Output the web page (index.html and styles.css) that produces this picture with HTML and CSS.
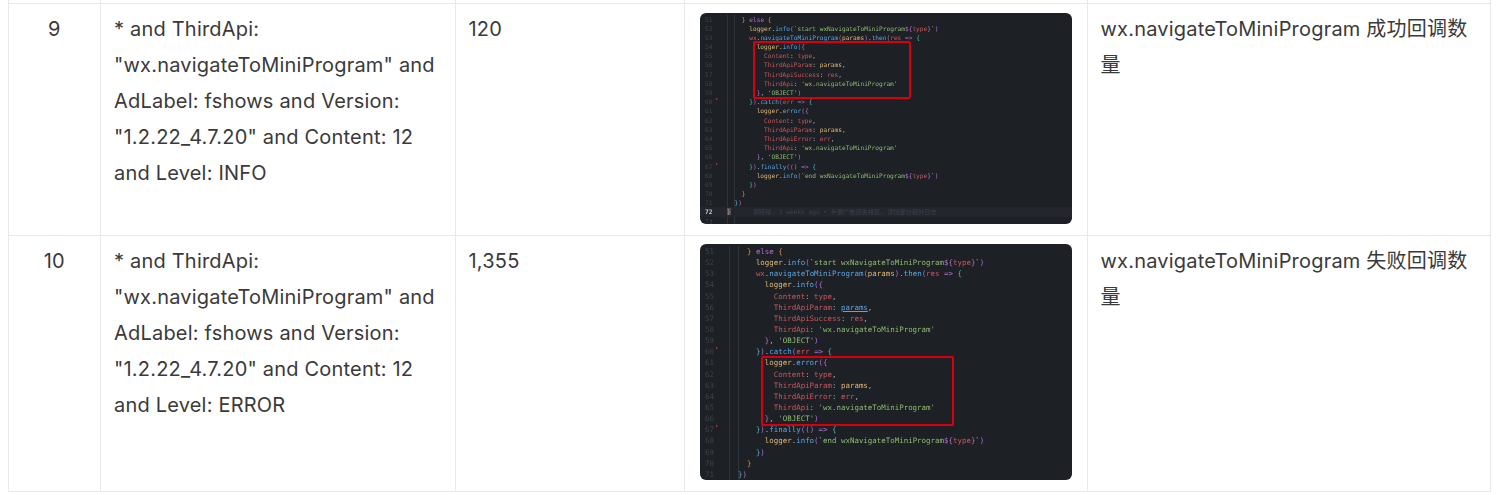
FILE: index.html
```html
<!DOCTYPE html>
<html lang="zh">
<head>
<meta charset="utf-8">
<title>Log query table</title>
<link rel="stylesheet" href="styles.css">
</head>
<body>
<table class="log-table">
<colgroup><col class="c-no"><col class="c-query"><col class="c-count"><col class="c-shot"><col class="c-desc"></colgroup>
<tbody>
<tr class="clip-row"><td></td><td></td><td></td><td></td><td></td></tr>
<tr class="row-a">
<td class="no">9</td>
<td>* and ThirdApi: "wx.navigateToMiniProgram" and AdLabel: fshows and Version: "1.2.22_4.7.20" and Content: 12 and Level: INFO</td>
<td>120</td>
<td class="shot-cell">
<div class="shot shot-a">
<div class="code">
<div class="ln"><span class="n">51</span><code>    <i class="o">}</i> <i class="p">else</i> <i class="o">{</i></code></div>
<div class="ln"><span class="n">52</span><code>      <i class="y">logger</i>.<i class="b">info</i><i class="p">(</i><i class="g">`start wxNavigateToMiniProgram</i><i class="p">${</i><i class="k">type</i><i class="p">}</i><i class="g">`</i><i class="p">)</i></code></div>
<div class="ln"><span class="n">53</span><code>      <i class="k">wx</i>.<i class="b">navigateToMiniProgram</i><i class="p">(</i><i class="y">params</i><i class="p">)</i>.<i class="b">then</i><i class="p">(</i><i class="k">res</i> <i class="p">=&gt;</i> <i class="c">{</i></code></div>
<div class="ln"><span class="n">54</span><code>        <i class="y">logger</i>.<i class="b">info</i><i class="p">({</i></code></div>
<div class="ln"><span class="n">55</span><code>          <i class="k">Content</i>: <i class="k">type</i>,</code></div>
<div class="ln"><span class="n">56</span><code>          <i class="k">ThirdApiParam</i>: <i class="y">params</i>,</code></div>
<div class="ln"><span class="n">57</span><code>          <i class="k">ThirdApiSuccess</i>: <i class="k">res</i>,</code></div>
<div class="ln"><span class="n">58</span><code>          <i class="k">ThirdApi</i>: <i class="g">'wx.navigateToMiniProgram'</i></code></div>
<div class="ln"><span class="n">59</span><code>        <i class="p">}</i>, <i class="g">'OBJECT'</i><i class="p">)</i></code></div>
<div class="ln mark"><span class="n">60</span><code>      <i class="c">}</i><i class="p">)</i>.<i class="b">catch</i><i class="p">(</i><i class="k">err</i> <i class="p">=&gt;</i> <i class="c">{</i></code></div>
<div class="ln"><span class="n">61</span><code>        <i class="y">logger</i>.<i class="b">error</i><i class="p">({</i></code></div>
<div class="ln"><span class="n">62</span><code>          <i class="k">Content</i>: <i class="k">type</i>,</code></div>
<div class="ln"><span class="n">63</span><code>          <i class="k">ThirdApiParam</i>: <i class="y">params</i>,</code></div>
<div class="ln"><span class="n">64</span><code>          <i class="k">ThirdApiError</i>: <i class="k">err</i>,</code></div>
<div class="ln"><span class="n">65</span><code>          <i class="k">ThirdApi</i>: <i class="g">'wx.navigateToMiniProgram'</i></code></div>
<div class="ln"><span class="n">66</span><code>        <i class="p">}</i>, <i class="g">'OBJECT'</i><i class="p">)</i></code></div>
<div class="ln mark"><span class="n">67</span><code>      <i class="c">}</i><i class="p">)</i>.<i class="b">finally</i><i class="p">(()</i> <i class="p">=&gt;</i> <i class="c">{</i></code></div>
<div class="ln"><span class="n">68</span><code>        <i class="y">logger</i>.<i class="b">info</i><i class="p">(</i><i class="g">`end wxNavigateToMiniProgram</i><i class="p">${</i><i class="k">type</i><i class="p">}</i><i class="g">`</i><i class="p">)</i></code></div>
<div class="ln"><span class="n">69</span><code>      <i class="c">}</i><i class="p">)</i></code></div>
<div class="ln"><span class="n">70</span><code>    <i class="o">}</i></code></div>
<div class="ln"><span class="n">71</span><code>  <i class="c">}</i><i class="p">)</i></code></div>
<div class="ln current"><span class="n">72</span><code><i class="o hl">}</i>      <i class="blame">郭晓婷, 3 weeks ago • 半屏广告流失排查, 添加部分额外日志</i></code></div>
<div class="ln"><span class="n">73</span><code></code></div>
</div>
<div class="redbox"></div>
</div>
</td>
<td>wx.navigateToMiniProgram 成功回调数量</td>
</tr>
<tr class="row-b">
<td class="no">10</td>
<td>* and ThirdApi: "wx.navigateToMiniProgram" and AdLabel: fshows and Version: "1.2.22_4.7.20" and Content: 12 and Level: ERROR</td>
<td>1,355</td>
<td class="shot-cell">
<div class="shot shot-b">
<div class="code">
<div class="ln"><span class="n">51</span><code>    <i class="o">}</i> <i class="p">else</i> <i class="o">{</i></code></div>
<div class="ln"><span class="n">52</span><code>      <i class="y">logger</i>.<i class="b">info</i><i class="p">(</i><i class="g">`start wxNavigateToMiniProgram</i><i class="p">${</i><i class="k">type</i><i class="p">}</i><i class="g">`</i><i class="p">)</i></code></div>
<div class="ln"><span class="n">53</span><code>      <i class="k">wx</i>.<i class="b">navigateToMiniProgram</i><i class="p">(</i><i class="y">params</i><i class="p">)</i>.<i class="b">then</i><i class="p">(</i><i class="k">res</i> <i class="p">=&gt;</i> <i class="c">{</i></code></div>
<div class="ln"><span class="n">54</span><code>        <i class="y">logger</i>.<i class="b">info</i><i class="p">({</i></code></div>
<div class="ln"><span class="n">55</span><code>          <i class="k">Content</i>: <i class="k">type</i>,</code></div>
<div class="ln"><span class="n">56</span><code>          <i class="k">ThirdApiParam</i>: <i class="u">params</i>,</code></div>
<div class="ln"><span class="n">57</span><code>          <i class="k">ThirdApiSuccess</i>: <i class="k">res</i>,</code></div>
<div class="ln"><span class="n">58</span><code>          <i class="k">ThirdApi</i>: <i class="g">'wx.navigateToMiniProgram'</i></code></div>
<div class="ln"><span class="n">59</span><code>        <i class="p">}</i>, <i class="g">'OBJECT'</i><i class="p">)</i></code></div>
<div class="ln mark"><span class="n">60</span><code>      <i class="c">}</i><i class="p">)</i>.<i class="b">catch</i><i class="p">(</i><i class="k">err</i> <i class="p">=&gt;</i> <i class="c">{</i></code></div>
<div class="ln"><span class="n">61</span><code>        <i class="y">logger</i>.<i class="b">error</i><i class="p">({</i></code></div>
<div class="ln"><span class="n">62</span><code>          <i class="k">Content</i>: <i class="k">type</i>,</code></div>
<div class="ln"><span class="n">63</span><code>          <i class="k">ThirdApiParam</i>: <i class="y">params</i>,</code></div>
<div class="ln"><span class="n">64</span><code>          <i class="k">ThirdApiError</i>: <i class="k">err</i>,</code></div>
<div class="ln"><span class="n">65</span><code>          <i class="k">ThirdApi</i>: <i class="g">'wx.navigateToMiniProgram'</i></code></div>
<div class="ln"><span class="n">66</span><code>        <i class="p">}</i>, <i class="g">'OBJECT'</i><i class="p">)</i></code></div>
<div class="ln mark"><span class="n">67</span><code>      <i class="c">}</i><i class="p">)</i>.<i class="b">finally</i><i class="p">(()</i> <i class="p">=&gt;</i> <i class="c">{</i></code></div>
<div class="ln"><span class="n">68</span><code>        <i class="y">logger</i>.<i class="b">info</i><i class="p">(</i><i class="g">`end wxNavigateToMiniProgram</i><i class="p">${</i><i class="k">type</i><i class="p">}</i><i class="g">`</i><i class="p">)</i></code></div>
<div class="ln"><span class="n">69</span><code>      <i class="c">}</i><i class="p">)</i></code></div>
<div class="ln"><span class="n">70</span><code>    <i class="o">}</i></code></div>
<div class="ln"><span class="n">71</span><code>  <i class="c">}</i><i class="p">)</i></code></div>
</div>
<div class="redbox"></div>
</div>
</td>
<td>wx.navigateToMiniProgram 失败回调数量</td>
</tr>
</tbody>
</table>
</body>
</html>
```
FILE: styles.css
```css
html, body {
  margin: 0;
  padding: 0;
  background: #fff;
  height: 495px;
  overflow: hidden;
}
body {
  padding-left: 7.5px;
  font-family: Inter, "Noto Sans CJK SC", sans-serif;
  font-size: 20px;
  line-height: 36px;
  letter-spacing: 0.2px;
  color: #3a3a3a;
}
.log-table {
  border-collapse: collapse;
  table-layout: fixed;
  width: 1482px;
}
.c-no { width: 92.5px; }
.c-query { width: 354.5px; }
.c-count { width: 229px; }
.c-shot { width: 403px; }
.c-desc { width: 403px; }
.log-table td {
  box-sizing: border-box;
  border: 1px solid #e8e8e8;
  padding: 7px 13px 0;
  vertical-align: top;
  overflow-wrap: break-word;
}
.clip-row td { height: 3px; padding: 0; border-top: 0; line-height: 0; }
.row-a td { height: 232px; }
.row-b td { height: 256px; }
.log-table td.no { text-align: center; }
.log-table td.shot-cell { padding: 9px 0 0; }
.row-b td.shot-cell { padding-top: 8px; }
.shot {
  position: relative;
  width: 372px;
  margin: 0 auto;
  background: #1d2025;
  border-radius: 6px;
  overflow: hidden;
  line-height: 0;
  letter-spacing: 0;
  font-family: "DejaVu Sans Mono", "Liberation Mono", "Noto Sans CJK SC", monospace;
}
.shot-a { height: 211px; --fs: 6.16px; --lh: 9.2px; --gut: 27.5px; --top: 2px; }
.shot-b { height: 236px; --fs: 7.45px; --lh: 11.15px; --gut: 29.5px; --top: 2.5px; }
.code {
  padding-top: var(--top);
  font-size: var(--fs);
  line-height: var(--lh);
  color: #abb2bf;
  filter: blur(0.42px);
}
.ln {
  display: flex;
  height: var(--lh);
  position: relative;
}
.n {
  width: var(--gut);
  flex: none;
  box-sizing: border-box;
  padding-left: 5.5px;
  color: #3d434c;
}
.ln code {
  font: inherit;
  white-space: pre;
  flex: 1;
  background: repeating-linear-gradient(90deg, #2f343b 0 1px, transparent 1px 2ch) 0 0 / 4ch 100% no-repeat;
}
.ln i { font-style: normal; }
.mark::after {
  content: "";
  position: absolute;
  left: 16px;
  top: 1px;
  border-left: 2px solid #d8303a;
  border-top: 1.5px solid transparent;
  border-bottom: 1.5px solid transparent;
}
.current { background: #23272d; }
.current code { background: none; }
.current .n { color: #c8ccd2; font-weight: 700; }
.o { color: #c98c55; }
.hl { background: #4a4f57; color: #d19a66; }
.p { color: #b06fcf; }
.y { color: #dfb976; }
.b { color: #5aa5e4; }
.g { color: #8fbb70; }
.k { color: #c9565f; }
.c { color: #4fb0bc; }
.u { color: #5aa5e4; text-decoration: underline; }
.blame { color: #3c424b; }
.redbox {
  position: absolute;
  box-sizing: border-box;
  border: 2px solid #d8000f;
  border-radius: 2px;
  filter: blur(0.25px);
}
.shot-a .redbox { left: 53px; top: 28.5px; width: 158px; height: 58px; }
.shot-b .redbox { left: 61.5px; top: 112.5px; width: 193px; height: 69.5px; }
```
